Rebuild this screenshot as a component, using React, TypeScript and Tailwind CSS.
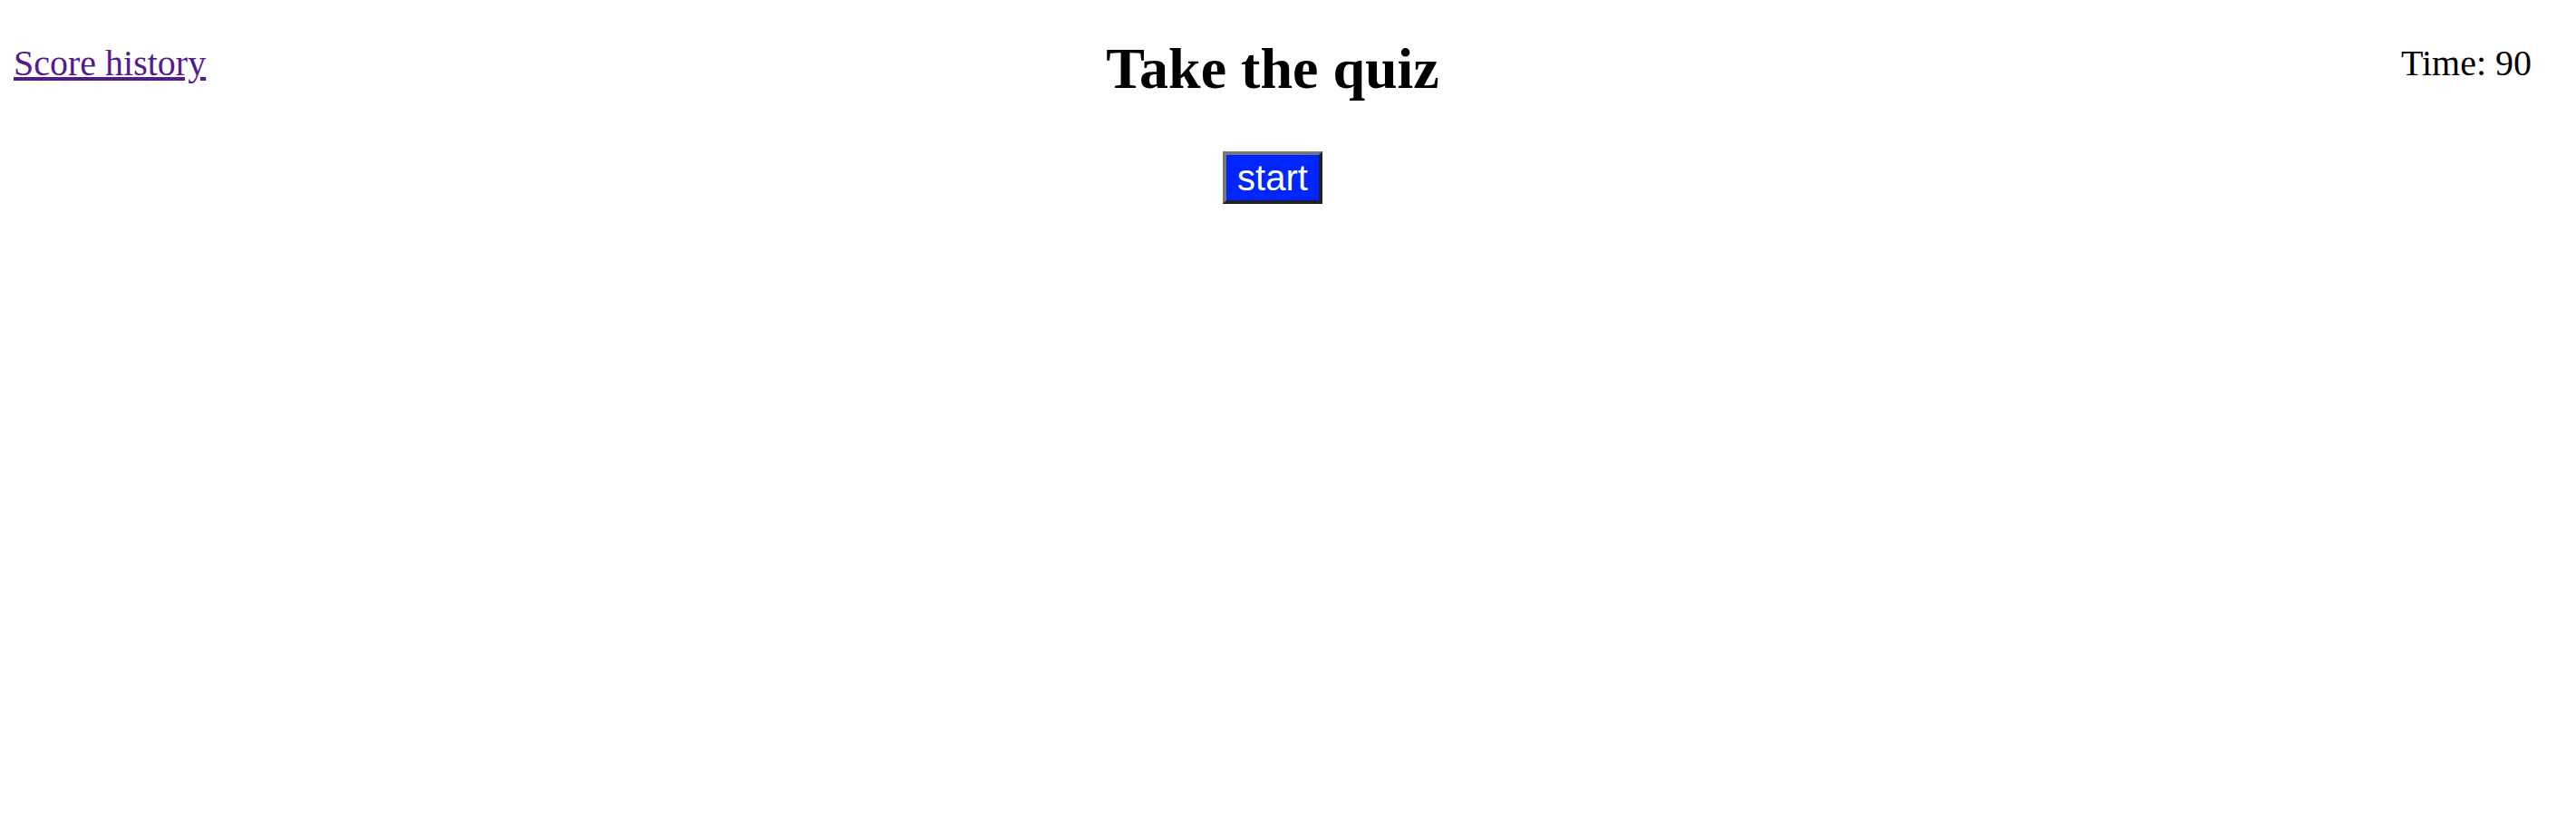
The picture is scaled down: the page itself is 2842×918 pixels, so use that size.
import React from "react";

export default function App() {
  return (
    <div className="min-h-[918px] w-full bg-white text-black" style={{ fontFamily: '"Liberation Serif", "Times New Roman", serif' }}>
      <div className="grid grid-cols-[1fr_auto_1fr] items-start pl-[15px] pr-[49px] pt-[37px]">
        <div className="justify-self-start pt-[10px]">
          <a href="#" className="text-[40px] leading-[46px] text-[#551a8b] underline">
            Score history
          </a>
        </div>
        <h1 className="mt-[2px] text-[64px] font-bold leading-[74px]">Take the quiz</h1>
        <div className="justify-self-end pt-[10px] text-[40px] leading-[46px]">Time: 90</div>
      </div>
      <div className="flex justify-center pl-[15px] pr-[49px] pt-[54px]">
        <button
          className="border-4 border-t-[#777777] border-l-[#777777] border-b-[#222222] border-r-[#222222] bg-[#0026ff] px-[12px] py-[2px] text-[40px] leading-[46px] text-white"
          style={{ fontFamily: '"Liberation Sans", Arial, sans-serif' }}
        >
          start
        </button>
      </div>
    </div>
  );
}
